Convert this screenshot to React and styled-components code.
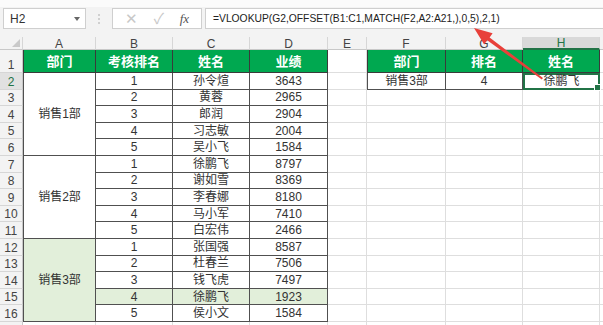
import React from 'react';
import styled, { createGlobalStyle, css } from 'styled-components';

const Global = createGlobalStyle`
  html, body { margin: 0; padding: 0; background: #fff; }
  body {
    font-family: "Liberation Sans", "Noto Sans CJK SC", sans-serif;
    width: 603px; height: 325px; overflow: hidden;
  }
`;

const Page = styled.div`
  position: relative;
  width: 603px;
  height: 325px;
  overflow: hidden;
  background: #fff;
`;

const Toolbar = styled.div`
  display: flex;
  align-items: flex-start;
  height: 37px;
  box-sizing: border-box;
  background: #f3f3f3;
  border-top: 7px solid #fbfbfb;
  padding: 1px 0 0 3px;
`;

const Box = styled.div`
  height: 21px;
  box-sizing: border-box;
  background: #fff;
  border: 1px solid #cfcfcf;
  display: flex;
  align-items: center;
  font-size: 12px;
  color: #333;
`;

const NameBox = styled(Box)`
  width: 83px;
  padding: 0 5px 0 6px;
  justify-content: space-between;
`;

const Caret = styled.span`
  width: 0; height: 0;
  border-left: 3px solid transparent;
  border-right: 3px solid transparent;
  border-top: 4px solid #666;
`;

const Dots = styled.div`
  width: 26px;
  height: 21px;
  display: flex;
  flex-direction: column;
  align-items: center;
  justify-content: center;
  gap: 2px;
  span { width: 2px; height: 2px; background: #c4c4c4; border-radius: 1px; }
`;

const ButtonGroup = styled(Box)`
  width: 90px;
  margin-right: 3px;
  justify-content: space-around;
  padding: 0 4px;
`;

const ToolIcon = styled.span`
  font-size: ${p => p.$size || 14}px;
  color: ${p => p.$color || '#c8c8c8'};
  font-family: ${p => p.$serif ? '"Liberation Serif", serif' : 'inherit'};
  font-style: ${p => p.$serif ? 'italic' : 'normal'};
  line-height: 1;
`;

const FormulaBox = styled(Box)`
  flex: 1;
  padding-left: 7px;
  border-right: none;
  font-size: 10.3px;
  color: #222;
  white-space: nowrap;
`;

const Grid = styled.div`
  display: grid;
  grid-template-columns: 23px 73px 77px 77px 78px 39px 79px 77px 77px 30px;
  grid-template-rows: 13px 23px repeat(16, 16.6px);
`;

const centered = css`
  display: flex;
  align-items: center;
  justify-content: center;
  box-sizing: border-box;
  overflow: hidden;
  white-space: nowrap;
`;

const Corner = styled.div`
  ${centered};
  position: relative;
  background: #f3f3f3;
  border-right: 1px solid #d6d6d6;
  border-bottom: 1px solid #c8c8c8;
  &::after {
    content: '';
    position: absolute;
    right: 2px; bottom: 2px;
    border-left: 8px solid transparent;
    border-bottom: 8px solid #c9c9c9;
  }
`;

const ColHead = styled.div`
  ${centered};
  font-size: 12px;
  line-height: 1;
  color: ${p => p.$active ? '#217346' : '#444'};
  background: ${p => p.$active ? '#d9d9d9' : '#f3f3f3'};
  border-right: 1px solid #d6d6d6;
  border-bottom: ${p => p.$active ? '2px solid #217346' : '1px solid #c8c8c8'};
  padding-top: 1px;
`;

const RowHead = styled.div`
  ${centered};
  align-items: flex-end;
  padding-bottom: 1px;
  font-size: 12px;
  line-height: 1;
  color: ${p => p.$active ? '#217346' : '#444'};
  background: ${p => p.$active ? '#e1e1e1' : '#f3f3f3'};
  border-right: 1px solid #c8c8c8;
  border-bottom: 1px solid #d6d6d6;
`;

const Cell = styled.div`
  ${centered};
  font-size: 12px;
  line-height: 1;
  color: #333;
  background: ${p => p.$tint ? '#e2efda' : '#fff'};
  border-right: 1px solid ${p => p.$table ? '#505050' : '#dedede'};
  border-bottom: 1px solid ${p => p.$table ? '#505050' : '#dedede'};
  ${p => p.$left && css`border-left: 1px solid #505050;`}
  ${p => p.$span && css`grid-row: span ${p.$span};`}
  ${p => p.$head && css`
    background: #00a850;
    color: #fff;
    font-weight: bold;
    font-size: 13px;
    border-color: #3a3a3a;
  `}
`;

const SelectedCell = styled(Cell)`
  position: relative;
  overflow: visible;
  border: 2px solid #217346;
  &::after {
    content: '';
    position: absolute;
    right: -3px; bottom: -3px;
    width: 5px; height: 5px;
    background: #217346;
    border: 1px solid #fff;
  }
`;

const Overlay = styled.svg`
  position: absolute;
  left: 0; top: 0;
  pointer-events: none;
`;

const groups = [
  { dept: '销售1部', rows: [['1', '孙令煊', '3643'], ['2', '黄蓉', '2965'], ['3', '郎润', '2904'], ['4', '习志敏', '2004'], ['5', '吴小飞', '1584']] },
  { dept: '销售2部', rows: [['1', '徐鹏飞', '8797'], ['2', '谢如雪', '8369'], ['3', '李春娜', '8180'], ['4', '马小军', '7410'], ['5', '白宏伟', '2466']] },
  { dept: '销售3部', tint: true, rows: [['1', '张国强', '8587'], ['2', '杜春兰', '7506'], ['3', '钱飞虎', '7497'], ['4', '徐鹏飞', '1923', true], ['5', '侯小文', '1584']] },
];

const letters = ['A', 'B', 'C', 'D', 'E', 'F', 'G', 'H', ''];

export default function App() {
  const cells = [];
  cells.push(<Corner key="corner" />);
  letters.forEach(l => cells.push(<ColHead key={'c' + l} $active={l === 'H'}>{l}</ColHead>));

  // Row 1
  cells.push(<RowHead key="r1">1</RowHead>);
  ['部门', '考核排名', '姓名', '业绩'].forEach((t, i) =>
    cells.push(<Cell key={'h' + i} $head $table $left={i === 0}>{t}</Cell>));
  cells.push(<Cell key="e1" />);
  cells.push(<Cell key="f1" $head $table $left>部门</Cell>);
  cells.push(<Cell key="g1" $head $table>排名</Cell>);
  cells.push(<Cell key="h1" $head $table>姓名</Cell>);
  cells.push(<Cell key="i1" />);

  let r = 2;
  groups.forEach((g, gi) => {
    g.rows.forEach((row, ri) => {
      const [rank, name, score, hl] = row;
      cells.push(<RowHead key={'r' + r} $active={r === 2}>{r}</RowHead>);
      if (ri === 0) {
        cells.push(<Cell key={'a' + gi} $table $left $span={5} $tint={g.tint}>{g.dept}</Cell>);
      }
      cells.push(<Cell key={'b' + r} $table $tint={hl}>{rank}</Cell>);
      cells.push(<Cell key={'c' + r} $table $tint={hl}>{name}</Cell>);
      cells.push(<Cell key={'d' + r} $table $tint={hl}>{score}</Cell>);
      cells.push(<Cell key={'e' + r} />);
      if (r === 2) {
        cells.push(<Cell key="f2" $table $left>销售3部</Cell>);
        cells.push(<Cell key="g2" $table>4</Cell>);
        cells.push(<SelectedCell key="h2">徐鹏飞</SelectedCell>);
      } else {
        cells.push(<Cell key={'f' + r} />);
        cells.push(<Cell key={'g' + r} />);
        cells.push(<Cell key={'h' + r} />);
      }
      cells.push(<Cell key={'i' + r} />);
      r += 1;
    });
  });

  cells.push(<RowHead key="r17" />);
  for (let i = 0; i < 9; i++) cells.push(<Cell key={'z' + i} />);

  return (
    <Page>
      <Global />
      <Toolbar>
        <NameBox>H2<Caret /></NameBox>
        <Dots><span /><span /><span /></Dots>
        <ButtonGroup>
          <ToolIcon $size={15}>✕</ToolIcon>
          <ToolIcon $size={15}>✓</ToolIcon>
          <ToolIcon $serif $size={13} $color="#555">fx</ToolIcon>
        </ButtonGroup>
        <FormulaBox>=VLOOKUP(G2,OFFSET(B1:C1,MATCH(F2,A2:A21,),0,5),2,1)</FormulaBox>
      </Toolbar>
      <Grid>{cells}</Grid>
      <Overlay width="603" height="325" viewBox="0 0 603 325">
        <polygon points="474,28 492.6,33.2 489.6,37.4 543,78 541.8,79.6 487.2,40.2 484.2,44.4" fill="#e8403a" />
      </Overlay>
    </Page>
  );
}
